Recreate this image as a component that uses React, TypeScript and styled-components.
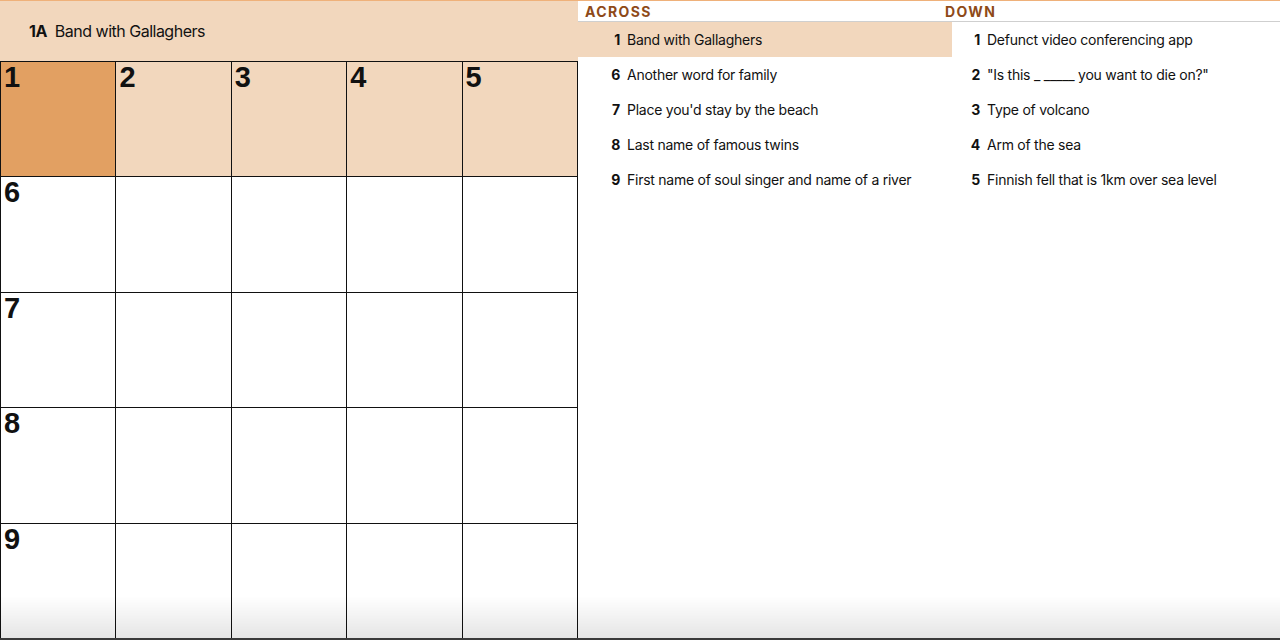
import React from 'react'
import styled, { createGlobalStyle } from 'styled-components'

const GlobalStyle = createGlobalStyle`
  html, body {
    margin: 0;
    padding: 0;
    background: #fff;
    font-family: Inter, "Noto Sans", "Liberation Sans", sans-serif;
    color: #111;
  }
`

const Page = styled.div`
  display: flex;
  border-top: 1px solid #efb17a;
  height: 639px;
  overflow: hidden;
`

const Board = styled.div`
  width: 578px;
  flex-shrink: 0;
  display: flex;
  flex-direction: column;
`

const ClueBar = styled.div`
  height: 60px;
  background: #f2d7bd;
  display: flex;
  align-items: center;
  gap: 8px;
  padding-left: 29px;
  font-size: 16px;
  letter-spacing: -0.5px;
`

const ClueBarLabel = styled.span`
  font-weight: 700;
`

const Grid = styled.div`
  display: grid;
  grid-template-columns: repeat(5, 1fr);
  grid-auto-rows: 1fr;
  gap: 1px;
  width: 578px;
  height: 578px;
  box-sizing: border-box;
  border: 1px solid #111;
  background: #111;
`

const Cell = styled.div<{ $state: 'active' | 'word' | 'none' }>`
  background: ${(p) =>
    p.$state === 'active' ? '#e2a062' : p.$state === 'word' ? '#f2d7bd' : '#fff'};
  position: relative;
`

const CellNumber = styled.span`
  position: absolute;
  top: 1px;
  left: 3px;
  font-family: "Liberation Sans", Arial, sans-serif;
  font-weight: 700;
  font-size: 29px;
  line-height: 1;
`

const Clues = styled.div`
  flex: 1;
  display: grid;
  grid-template-columns: 360px 1fr;
  align-content: start;
`

const ClueColumn = styled.div`
  display: flex;
  flex-direction: column;
`

const ColumnTitle = styled.div`
  height: 20px;
  line-height: 21px;
  padding-left: 7px;
  border-bottom: 1px solid #cfcfcf;
  font-size: 14px;
  font-weight: 700;
  letter-spacing: 1.4px;
  color: #8e4a18;
`

const ClueRow = styled.div<{ $active?: boolean; $wide?: boolean }>`
  height: 35px;
  display: flex;
  align-items: center;
  gap: 7px;
  padding-left: 28px;
  font-size: 14px;
  letter-spacing: -0.25px;
  background: ${(p) => (p.$active ? '#f2d7bd' : 'transparent')};
  margin-right: ${(p) => (p.$wide ? '-14px' : '0')};
`

const ClueNum = styled.span`
  width: 14px;
  text-align: right;
  font-weight: 700;
  flex-shrink: 0;
`

const BottomShade = styled.div`
  position: fixed;
  left: 0;
  right: 0;
  bottom: 0;
  height: 42px;
  pointer-events: none;
  background: linear-gradient(to bottom, rgba(0, 0, 0, 0), rgba(0, 0, 0, 0.1));
  border-bottom: 2px solid #3a3a3a;
`

const across = [
  { n: 1, text: 'Band with Gallaghers' },
  { n: 6, text: 'Another word for family' },
  { n: 7, text: "Place you'd stay by the beach" },
  { n: 8, text: 'Last name of famous twins' },
  { n: 9, text: 'First name of soul singer and name of a river' },
]

const down = [
  { n: 1, text: 'Defunct video conferencing app' },
  { n: 2, text: '"Is this _ _____ you want to die on?"' },
  { n: 3, text: 'Type of volcano' },
  { n: 4, text: 'Arm of the sea' },
  { n: 5, text: 'Finnish fell that is 1km over sea level' },
]

const numberAt = (r: number, c: number) => {
  if (r === 0) return c + 1
  if (c === 0) return r + 5
  return null
}

const App = () => {
  const activeRow = 0
  const activeCol = 0
  return (
    <>
      <GlobalStyle />
      <Page>
        <Board>
          <ClueBar>
            <ClueBarLabel>1A</ClueBarLabel>
            <span>Band with Gallaghers</span>
          </ClueBar>
          <Grid>
            {Array.from({ length: 25 }).map((_, i) => {
              const r = Math.floor(i / 5)
              const c = i % 5
              const num = numberAt(r, c)
              const state =
                r === activeRow && c === activeCol ? 'active' : r === activeRow ? 'word' : 'none'
              return (
                <Cell key={i} $state={state}>
                  {num && <CellNumber>{num}</CellNumber>}
                </Cell>
              )
            })}
          </Grid>
        </Board>
        <Clues>
          <ClueColumn>
            <ColumnTitle>ACROSS</ColumnTitle>
            {across.map((clue) => (
              <ClueRow key={clue.n} $active={clue.n === 1} $wide>
                <ClueNum>{clue.n}</ClueNum>
                {clue.text}
              </ClueRow>
            ))}
          </ClueColumn>
          <ClueColumn>
            <ColumnTitle>DOWN</ColumnTitle>
            {down.map((clue) => (
              <ClueRow key={clue.n}>
                <ClueNum>{clue.n}</ClueNum>
                {clue.text}
              </ClueRow>
            ))}
          </ClueColumn>
        </Clues>
      </Page>
      <BottomShade />
    </>
  )
}

export default App
